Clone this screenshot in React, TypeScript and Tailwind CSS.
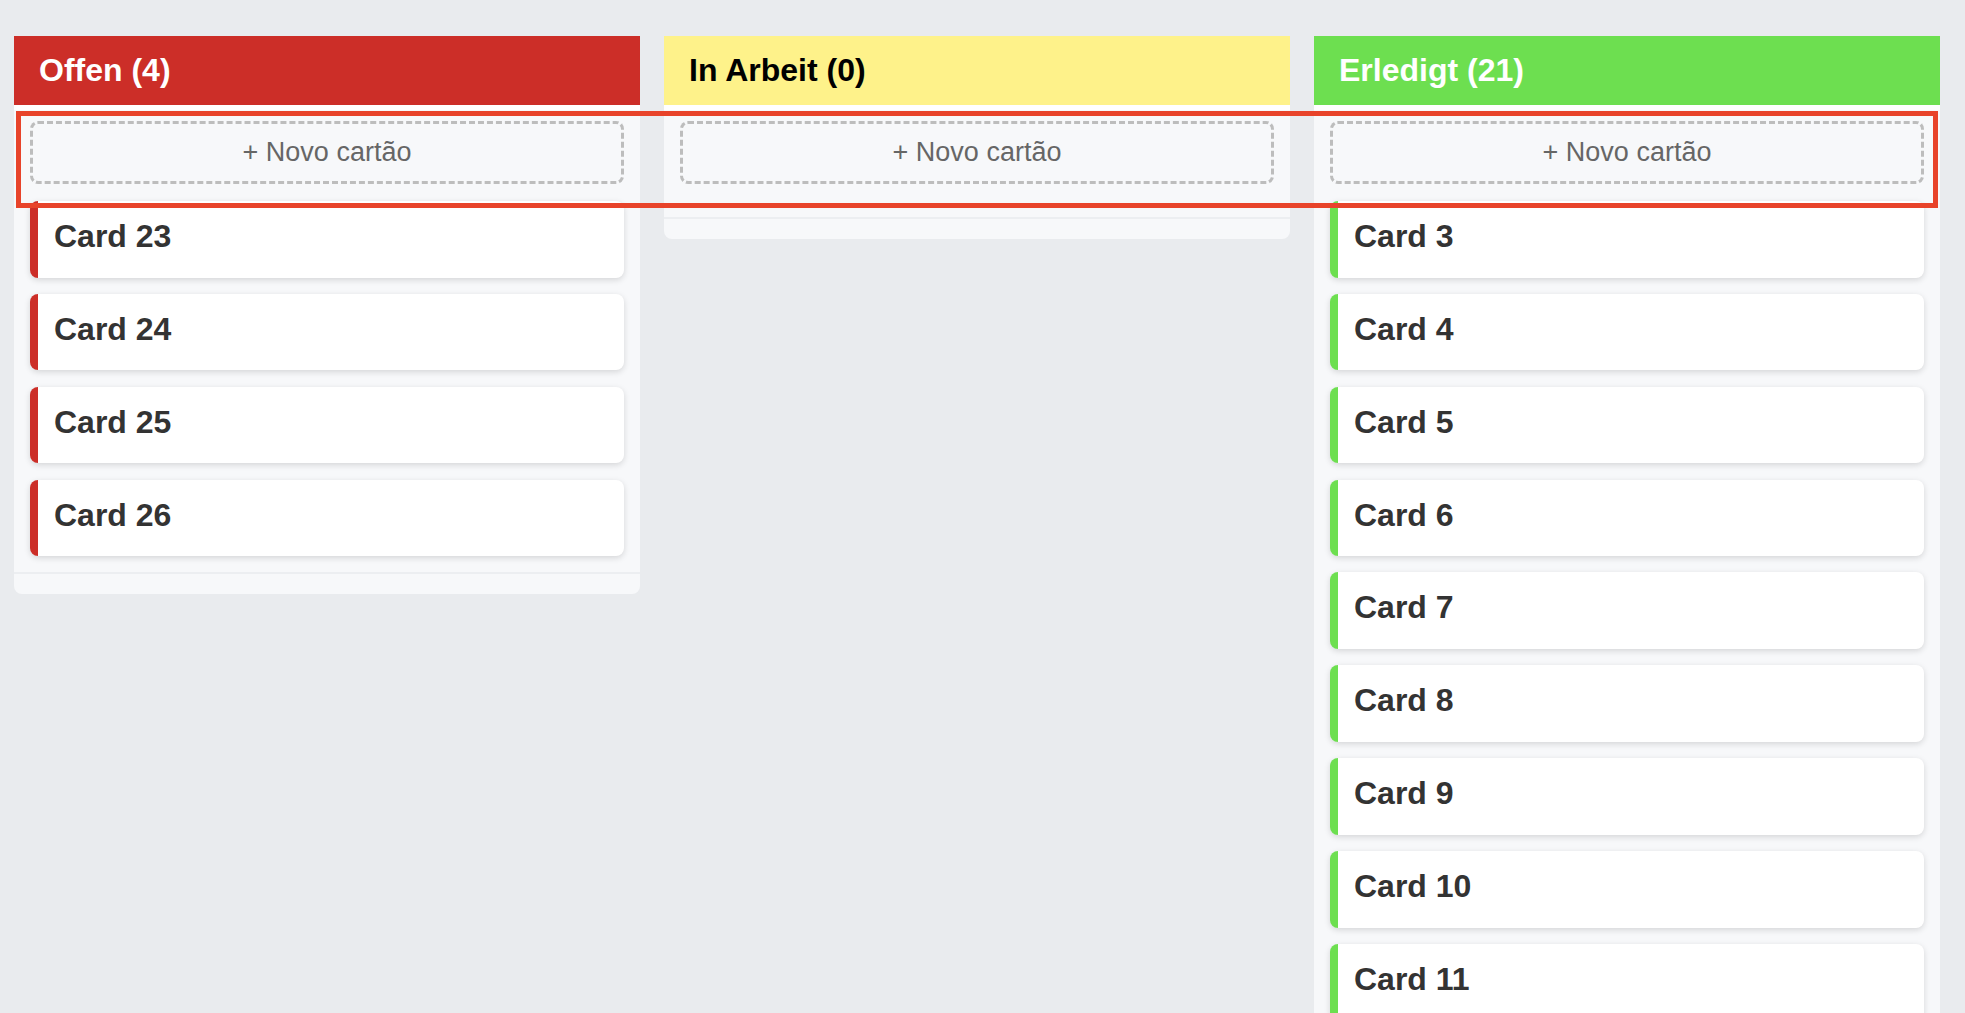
import React from "react";

type Column = {
  title: string;
  headerClass: string;
  accentClass: string;
  cards: number[];
};

const columns: Column[] = [
  {
    title: "Offen (4)",
    headerClass: "bg-[#cc2e28] text-white",
    accentClass: "border-[#cc2e28]",
    cards: [23, 24, 25, 26],
  },
  {
    title: "In Arbeit (0)",
    headerClass: "bg-[#fef28a] text-black",
    accentClass: "border-[#fef28a]",
    cards: [],
  },
  {
    title: "Erledigt (21)",
    headerClass: "bg-[#6ddf50] text-white",
    accentClass: "border-[#6ddf50]",
    cards: [3, 4, 5, 6, 7, 8, 9, 10, 11, 12, 13, 14, 15, 16, 17, 18, 19, 20, 21, 22, 27],
  },
];

function Card({ n, accentClass }: { n: number; accentClass: string }) {
  return (
    <div
      className={`mb-[16.2px] h-[76.7px] rounded-[8px] border-l-[8px] bg-white pl-[16px] pt-[17px] shadow-[0_2px_6px_rgba(0,0,0,0.14)] ${accentClass}`}
    >
      <h3 className="text-[32px] leading-[37px] font-bold text-[#333]">Card {n}</h3>
    </div>
  );
}

function KanbanColumn({ col }: { col: Column }) {
  return (
    <div className="w-[626px] shrink-0">
      {/* Header */}
      <div className={`flex h-[69px] items-center px-[25px] text-[32px] leading-[37px] font-bold ${col.headerClass}`}>
        {col.title}
      </div>

      {/* Body */}
      <div className="rounded-b-[8px] border-t-[5px] border-white bg-[#f7f8fa]">
        <div className="px-[16px] pt-[11px]">
          <button className="mb-[16.6px] flex h-[63.3px] w-full items-center justify-center rounded-[8px] border-[3px] border-dashed border-[#bdbdbd] bg-[#f7f8fa] text-[27px] text-[#666]">
            + Novo cartão
          </button>
          <div className="min-h-[16px]">
            {col.cards.map((n) => (
              <Card key={n} n={n} accentClass={col.accentClass} />
            ))}
          </div>
        </div>
        <div className="h-[2px] bg-[#eceef1]" />
        <div className="h-[20px]" />
      </div>
    </div>
  );
}

export default function App() {
  return (
    <div className="relative h-screen overflow-hidden bg-[#e9ebee] pl-[14px] pt-[36px] font-['Liberation_Sans',Arial,sans-serif]">
      <div className="flex items-start gap-[24px]">
        {columns.map((col) => (
          <KanbanColumn key={col.title} col={col} />
        ))}
      </div>

      {/* Highlight annotation */}
      <div className="pointer-events-none absolute left-[16px] top-[111px] h-[97px] w-[1922px] border-[5px] border-[#e8432a]" />
    </div>
  );
}
